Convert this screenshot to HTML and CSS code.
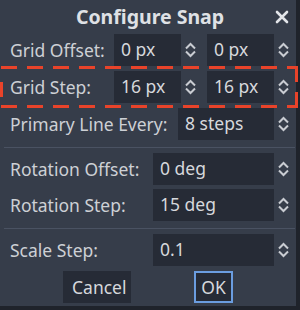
FILE: index.html
```html
<!DOCTYPE html>
<html lang="en">
<head>
    <meta charset="UTF-8">
    <meta name="viewport" content="width=device-width, initial-scale=1.0">
    <title>Configure Snap</title>
    <link rel="stylesheet" href="styles.css">
</head>
<body>
    <div class="dialog">
        <div class="title-bar">
            <span></span>
            <h2 class="title">Configure Snap</h2>
            <button class="close" aria-label="Close">
                <svg width="14" height="14" viewBox="0 0 14 14">
                    <path d="M2 2 L12 12 M12 2 L2 12" stroke="#e3e5e9" stroke-width="2.6" stroke-linecap="round"/>
                </svg>
            </button>
        </div>

        <div class="content">
            <div class="section">
                <div class="row">
                    <span class="label">Grid Offset:</span>
                    <div class="pair">
                        <div class="spin"><div class="field narrow">0 px</div><svg class="arrows" width="13" height="18" viewBox="0 0 13 18"><path d="M2 7.5 L6.5 3 L11 7.5 M2 10.5 L6.5 15 L11 10.5" fill="none" stroke="#c9ccd2" stroke-width="2"/></svg></div>
                        <div class="spin"><div class="field narrow">0 px</div><svg class="arrows" width="13" height="18" viewBox="0 0 13 18"><path d="M2 7.5 L6.5 3 L11 7.5 M2 10.5 L6.5 15 L11 10.5" fill="none" stroke="#c9ccd2" stroke-width="2"/></svg></div>
                    </div>
                </div>
                <div class="row">
                    <span class="label">Grid Step:</span>
                    <div class="pair">
                        <div class="spin"><div class="field narrow">16 px</div><svg class="arrows" width="13" height="18" viewBox="0 0 13 18"><path d="M2 7.5 L6.5 3 L11 7.5 M2 10.5 L6.5 15 L11 10.5" fill="none" stroke="#c9ccd2" stroke-width="2"/></svg></div>
                        <div class="spin"><div class="field narrow">16 px</div><svg class="arrows" width="13" height="18" viewBox="0 0 13 18"><path d="M2 7.5 L6.5 3 L11 7.5 M2 10.5 L6.5 15 L11 10.5" fill="none" stroke="#c9ccd2" stroke-width="2"/></svg></div>
                    </div>
                </div>
                <div class="row">
                    <span class="label">Primary Line Every:</span>
                    <div class="spin"><div class="field medium">8 steps</div><svg class="arrows" width="13" height="18" viewBox="0 0 13 18"><path d="M2 7.5 L6.5 3 L11 7.5 M2 10.5 L6.5 15 L11 10.5" fill="none" stroke="#c9ccd2" stroke-width="2"/></svg></div>
                </div>
            </div>

            <hr class="separator">

            <div class="section tight">
                <div class="row">
                    <span class="label">Rotation Offset:</span>
                    <div class="spin"><div class="field wide">0 deg</div><svg class="arrows" width="13" height="18" viewBox="0 0 13 18"><path d="M2 7.5 L6.5 3 L11 7.5 M2 10.5 L6.5 15 L11 10.5" fill="none" stroke="#c9ccd2" stroke-width="2"/></svg></div>
                </div>
                <div class="row">
                    <span class="label">Rotation Step:</span>
                    <div class="spin"><div class="field wide">15 deg</div><svg class="arrows" width="13" height="18" viewBox="0 0 13 18"><path d="M2 7.5 L6.5 3 L11 7.5 M2 10.5 L6.5 15 L11 10.5" fill="none" stroke="#c9ccd2" stroke-width="2"/></svg></div>
                </div>
            </div>

            <hr class="separator">

            <div class="section">
                <div class="row">
                    <span class="label">Scale Step:</span>
                    <div class="spin"><div class="field wide">0.1</div><svg class="arrows" width="13" height="18" viewBox="0 0 13 18"><path d="M2 7.5 L6.5 3 L11 7.5 M2 10.5 L6.5 15 L11 10.5" fill="none" stroke="#c9ccd2" stroke-width="2"/></svg></div>
                </div>
            </div>
        </div>

        <div class="buttons">
            <button class="btn cancel">Cancel</button>
            <button class="btn ok">OK</button>
        </div>

        <!-- highlight around the grid step row -->
        <svg class="highlight" width="300" height="310" viewBox="0 0 300 310">
            <line x1="1" y1="67.5" x2="298" y2="67.5" stroke="#e8432a" stroke-width="3" stroke-dasharray="16 10"/>
            <line x1="1" y1="106.5" x2="298" y2="106.5" stroke="#e8432a" stroke-width="3" stroke-dasharray="16 10"/>
            <rect x="0" y="82" width="3" height="15" fill="#e8432a"/>
            <rect x="295" y="68" width="3" height="14" fill="#e8432a"/>
            <rect x="295" y="92" width="3" height="14" fill="#e8432a"/>
        </svg>
    </div>
</body>
</html>
```

FILE: styles.css
```css
body {
    margin: 0;
    background-color: #1f232b;
    font-family: "Noto Sans", sans-serif;
    color: #cdd0d5;
}

.dialog {
    position: relative;
    width: 296px;
    height: 306px;
    background-color: #363d4a;
}

.title-bar {
    display: grid;
    grid-template-columns: 1fr auto 1fr;
    align-items: center;
    height: 34px;
    padding-left: 4px;
}

.title {
    margin: 0;
    font-size: 19.5px;
    font-weight: bold;
    color: #dfe1e5;
    line-height: 30px;
}

.close {
    justify-self: end;
    margin-right: 7px;
    padding: 0;
    border: none;
    background: none;
    display: flex;
    height: 30px;
    align-items: center;
}

.content {
    padding: 0 6px 0 10px;
}

.section {
    display: flex;
    flex-direction: column;
    gap: 5px;
}

.section.tight {
    gap: 4px;
}

.row {
    display: flex;
    align-items: center;
    justify-content: space-between;
    height: 32px;
    font-size: 17.5px;
}

.pair {
    display: flex;
    gap: 10px;
}

.spin {
    display: flex;
    align-items: center;
    gap: 3px;
}

.field {
    height: 32px;
    line-height: 31px;
    padding-left: 7px;
    box-sizing: border-box;
    background-color: #262b36;
    color: #d6d8dc;
}

.field.narrow {
    width: 67px;
}

.field.medium {
    width: 96px;
}

.field.wide {
    width: 121px;
}

.separator {
    margin: 7px -5px 5px -6px;
    border: none;
    height: 1px;
    background-color: #4a5262;
}

.buttons {
    display: flex;
    justify-content: space-evenly;
    margin-top: 5px;
}

.btn {
    height: 32px;
    padding: 0 8px;
    font-family: "Noto Sans", sans-serif;
    font-size: 17.5px;
    color: #d6d8dc;
    background-color: #262b36;
    border: 1px solid #262b36;
}

.btn.cancel {
    width: 68px;
}

.btn.ok {
    width: 39px;
    padding: 0;
    border: 2px solid #6b9de0;
}

.highlight {
    position: absolute;
    top: 0;
    left: 0;
    pointer-events: none;
}
```
